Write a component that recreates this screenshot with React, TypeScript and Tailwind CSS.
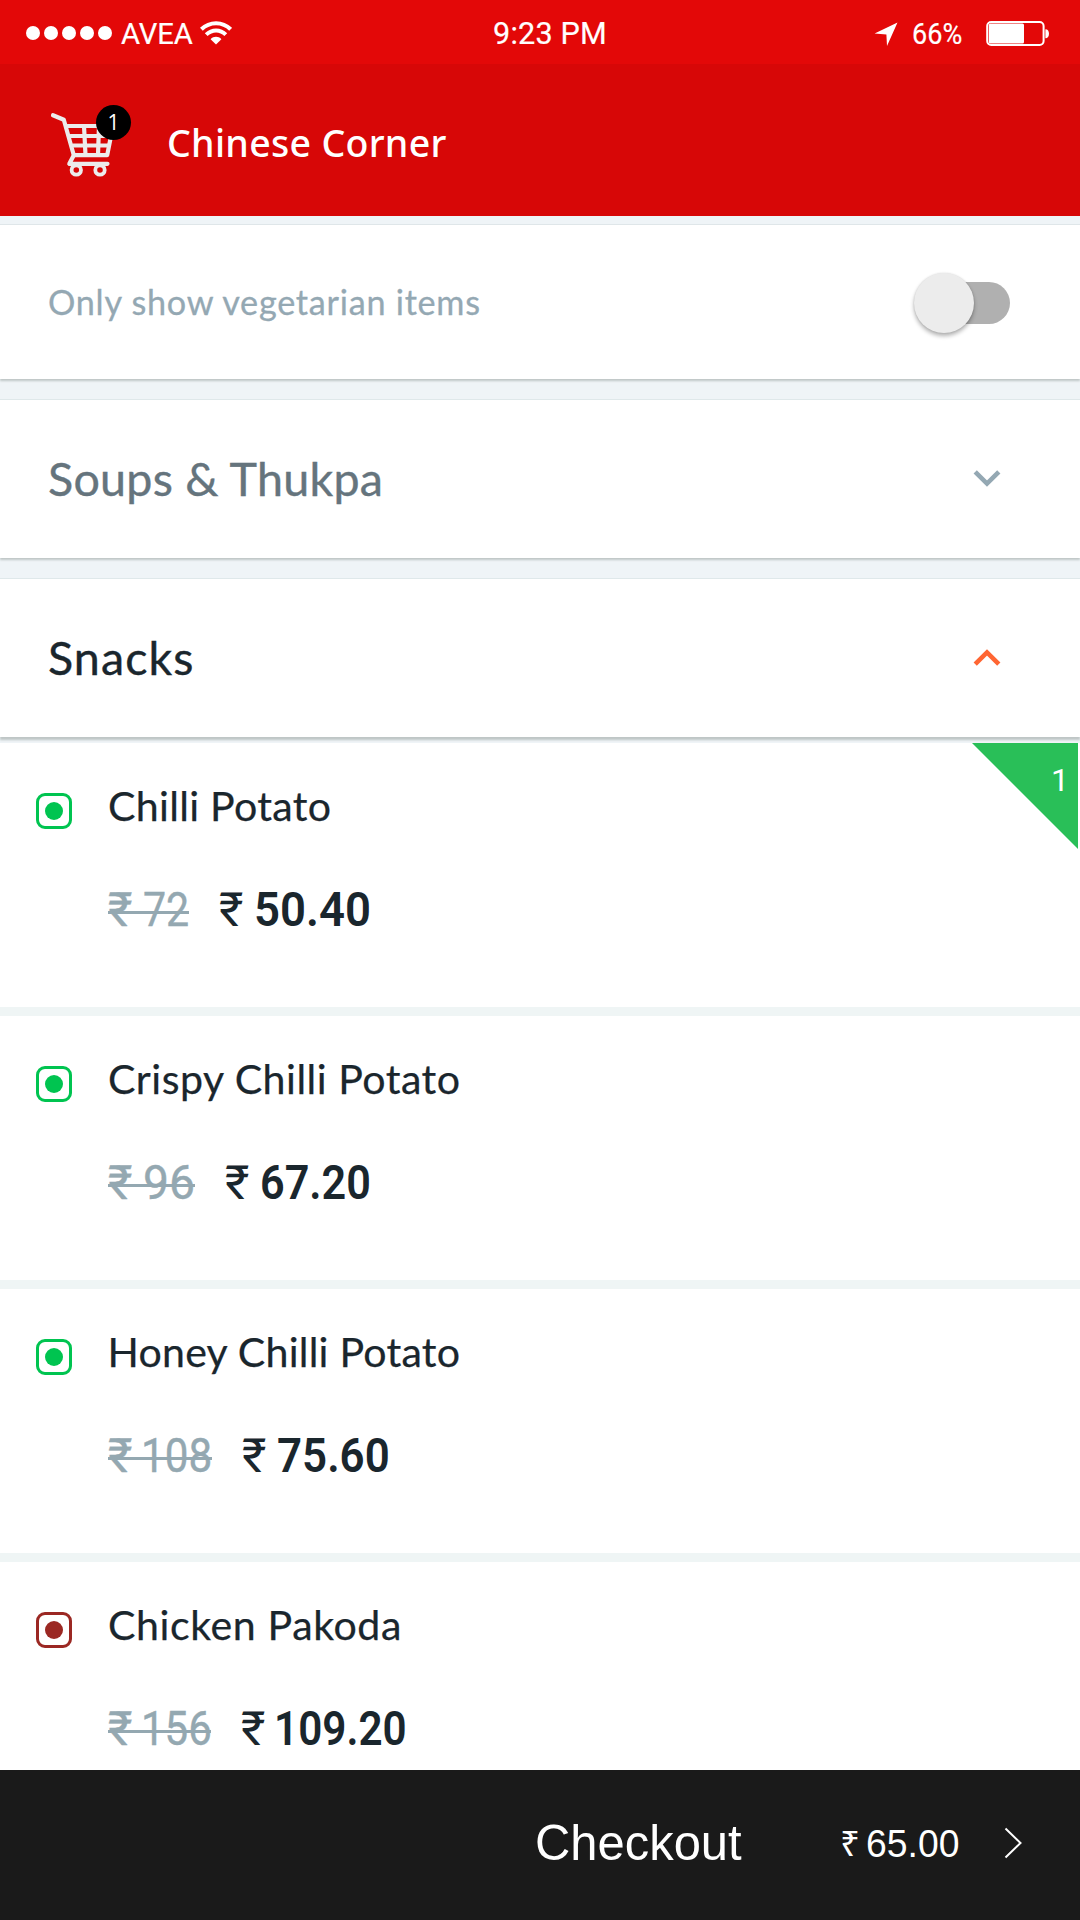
import React from "react";

type Item = {
  name: string;
  nameClass: string;
  veg: boolean;
  oldPrice: string;
  oldClass: string;
  strikeClass: string;
  price: string;
  priceClass: string;
  qty?: number;
};

const items: Item[] = [
  {
    name: "Chilli Potato",
    nameClass: "tracking-[0.3px]",
    veg: true,
    oldPrice: "72",
    oldClass: "scale-x-[0.871]",
    strikeClass: "w-[81px] mr-[30px]",
    price: "50.40",
    priceClass: "ml-[-0.5px] scale-x-[0.965]",
    qty: 1,
  },
  {
    name: "Crispy Chilli Potato",
    nameClass: "tracking-[0.5px]",
    veg: true,
    oldPrice: "96",
    oldClass: "scale-x-[0.98]",
    strikeClass: "w-[87px] mr-[30px]",
    price: "67.20",
    priceClass: "ml-[-0.5px] scale-x-[0.915]",
  },
  {
    name: "Honey Chilli Potato",
    nameClass: "ml-[-0.5px] tracking-[0.24px]",
    veg: true,
    oldPrice: "108",
    oldClass: "ml-[-2px] scale-x-[0.895]",
    strikeClass: "w-[104px] mr-[30px]",
    price: "75.60",
    priceClass: "scale-x-[0.93]",
  },
  {
    name: "Chicken Pakoda",
    nameClass: "tracking-[0.6px]",
    veg: false,
    oldPrice: "156",
    oldClass: "ml-[-2px] scale-x-[0.89]",
    strikeClass: "w-[103px] mr-[30px]",
    price: "109.20",
    priceClass: "ml-[-2px] scale-x-[0.895]",
  },
];

function StatusBar() {
  return (
    <div className="flex h-16 items-center bg-[#e30808] font-['Roboto','Liberation_Sans',sans-serif] text-white [-webkit-text-stroke:0.2px_currentColor]">
      <div className="flex w-[493px] items-center pl-[26px]">
        <div className="mt-[2px] flex gap-1">
          {[0, 1, 2, 3, 4].map((i) => (
            <span key={i} className="size-[14px] rounded-full bg-white" />
          ))}
        </div>
        <span className="ml-[9px] mt-[3px] w-[79px] whitespace-nowrap text-[29.2px] leading-8 tracking-[-0.1px]">
          AVEA
        </span>
        <svg className="mt-[1px] h-[24px] w-[32px]" viewBox="0 0 32 24" fill="none">
          <path d="M1.4 8.3C9.8.2 22.4.2 30.6 8.3" stroke="white" strokeWidth="4" />
          <path d="M6.2 13.6C12 8 20.2 8 25.8 13.6" stroke="white" strokeWidth="4" />
          <path d="M10.6 18.2C13.5 15 18.5 15 21.4 18.2L16 23.6Z" fill="white" />
        </svg>
      </div>
      <span className="mt-[3px] w-[381px] whitespace-nowrap text-[30.6px] leading-8 tracking-[0.2px]">
        9:23 PM
      </span>
      <svg className="mt-[3px] h-6 w-[24px]" viewBox="0 0 24 24">
        <path d="M.6 11.4L23.5 .6L13 24L12.4 12.4Z" fill="white" />
      </svg>
      <span className="ml-[14px] mt-[3px] w-[74px] origin-left scale-x-[0.905] whitespace-nowrap text-[29.9px] leading-8">
        66%
      </span>
      <svg className="mt-[2px] h-[25px] w-[64px]" viewBox="0 0 64 25">
        <rect x="1.2" y="1" width="56.4" height="23" rx="4" fill="none" stroke="white" strokeWidth="2" />
        <rect x="2.8" y="2.6" width="35.2" height="19.8" rx="1.5" fill="white" />
        <path d="M59.4 8.3C61.8 8.3 63 10.2 63 12.7S61.8 17.2 59.4 17.2Z" fill="white" />
      </svg>
    </div>
  );
}

function CartIcon() {
  return (
    <svg
      className="h-[66px] w-[66px]"
      viewBox="50 112 66 66"
      fill="none"
      stroke="#ececec"
      strokeLinecap="round"
      strokeLinejoin="round"
    >
      <path d="M53 115.2L63.8 119.8L73.8 155.2L69.3 163.8H107.5" strokeWidth="4.2" />
      <path d="M67.5 126H113L107.2 155.2H73.8" strokeWidth="4.2" />
      <path d="M70.5 136H111M73 145.5H109" strokeWidth="4.2" />
      <path d="M84 126L85.5 155M99 126L98 155" strokeWidth="4.2" />
      <circle cx="76.3" cy="170" r="4.7" strokeWidth="3.8" />
      <circle cx="100" cy="170" r="4.7" strokeWidth="3.8" />
    </svg>
  );
}

function Header() {
  return (
    <div className="flex h-[152px] items-center bg-[#d70707] pl-[50px]">
      <div className="relative mt-[10px] h-[66px] w-[66px]">
        <CartIcon />
        <span className="absolute left-[46px] top-[-7px] flex size-[35px] items-center justify-center rounded-full bg-black font-['Open_Sans',sans-serif] text-[21px] leading-none text-white">
          1
        </span>
      </div>
      <h1 className="ml-[51px] mt-[6px] whitespace-nowrap font-['Noto_Sans',sans-serif] text-[37.5px] font-medium leading-[48px] tracking-[0.3px] text-white">
        Chinese Corner
      </h1>
    </div>
  );
}

function Chevron({ up }: { up?: boolean }) {
  return (
    <svg className={up ? "h-[18px] w-[28px]" : "-mt-[3px] h-[18px] w-[28px]"} viewBox="0 0 28 18" fill="none">
      <path
        d={up ? "M2.2 15.2L14 3.4L25.8 15.2" : "M2.2 2.8L14 14.6L25.8 2.8"}
        stroke={up ? "#ff6633" : "#94a8b3"}
        strokeWidth="4.6"
      />
    </svg>
  );
}

function VegMark({ veg }: { veg: boolean }) {
  return (
    <span
      className={
        veg
          ? "mt-[50px] flex size-9 shrink-0 items-center justify-center rounded-[9px] border-[3px] border-[#00c450]"
          : "mt-[50px] flex size-9 shrink-0 items-center justify-center rounded-[9px] border-[3px] border-[#9b2823]"
      }
    >
      <span className={veg ? "size-[18px] rounded-full bg-[#00c450]" : "size-[18px] rounded-full bg-[#9b2823]"} />
    </span>
  );
}

function MenuItem({ item }: { item: Item }) {
  return (
    <li className="relative flex h-[273px] border-b-[9px] border-[#eff5f5] bg-white pl-9">
      <VegMark veg={item.veg} />
      <div className="ml-9 pt-[38px]">
        <h3
          className={`whitespace-nowrap text-[41.1px] leading-[48px] text-[#1a262d] [-webkit-text-stroke:0.25px_currentColor] ${item.nameClass}`}
        >
          {item.name}
        </h3>
        <div className="mt-[53px] flex whitespace-nowrap font-['Roboto',sans-serif] text-[47.2px] leading-[56px]">
          <span className={`relative flex text-[#94a8b1] [-webkit-text-stroke:0.4px_currentColor] ${item.strikeClass}`}>
            <span className="w-[35px] shrink-0">₹</span>
            <span className={`origin-left ${item.oldClass}`}>{item.oldPrice}</span>
            <span className="absolute left-0 top-[29px] h-[3px] w-full bg-[#94a8b1]" />
          </span>
          <span className="flex text-[#1a262d]">
            <span className="w-[35px] shrink-0">₹</span>
            <span className={`origin-left font-semibold ${item.priceClass}`}>{item.price}</span>
          </span>
        </div>
      </div>
      {item.qty && (
        <span className="absolute right-[2px] top-0 h-[106px] w-[106px] bg-[#29bf58] text-white [clip-path:polygon(0_0,100%_0,100%_100%)]">
          <span className="absolute right-[9px] top-[19px] font-['Roboto',sans-serif] text-[32px] leading-9">
            {item.qty}
          </span>
        </span>
      )}
    </li>
  );
}

export default function App() {
  return (
    <div className="flex h-[1920px] w-[1080px] flex-col overflow-hidden bg-[#eff4f7] font-['Lato',sans-serif]">
      <StatusBar />
      <Header />
      <div className="mt-2 flex h-[155px] shrink-0 items-center justify-between border-t border-[#dfe6e9] bg-white pl-12 pr-[70px] shadow-[0_2px_2px_#bfc6c6]">
        <span className="whitespace-nowrap text-[34.2px] leading-[48px] tracking-[0.74px] text-[#94a8b3] [-webkit-text-stroke:0.3px_currentColor]">
          Only show vegetarian items
        </span>
        <span className="relative mt-[2px] h-[42px] w-[90px] rounded-full bg-[#b0b0b0]">
          <span className="absolute left-[-6px] top-[-9px] size-[60px] rounded-full bg-[#ececec] shadow-[0_3px_4px_rgba(0,0,0,0.3),0_0_2px_rgba(0,0,0,0.12)]" />
        </span>
      </div>
      <div className="mt-5 flex h-[159px] shrink-0 items-center justify-between border-t border-[#dfe8ea] bg-white pl-12 pr-[79px] shadow-[0_2px_2px_#bfc6c6]">
        <span className="mt-[-2px] whitespace-nowrap text-[46.6px] leading-[56px] tracking-[0.27px] text-[#65747d] [-webkit-text-stroke:0.4px_currentColor]">
          Soups &amp; Thukpa
        </span>
        <Chevron />
      </div>
      <div className="relative z-10 mt-5 flex h-[159px] shrink-0 items-center justify-between border-t border-[#dfe8ea] bg-white pl-12 pr-[79px] shadow-[0_3px_2px_#bfc6c6]">
        <span className="mt-[-2px] whitespace-nowrap text-[46.6px] leading-[56px] tracking-[1.1px] text-[#1a262d] [-webkit-text-stroke:0.4px_currentColor]">
          Snacks
        </span>
        <Chevron up />
      </div>
      <ul className="mt-[6px] h-[1027px] shrink-0 overflow-hidden bg-white">
        {items.map((item) => (
          <MenuItem key={item.name} item={item} />
        ))}
      </ul>
      <div className="flex h-[150px] shrink-0 items-center bg-[#1a1a1a] pb-1 pl-[535px] font-['Liberation_Sans',sans-serif] text-white">
        <span className="w-[305px] origin-left scale-x-[0.965] whitespace-nowrap text-[50.7px] leading-[60px]">
          Checkout
        </span>
        <span className="mt-[1px] w-[26px] text-[35px] leading-[44px]">₹</span>
        <span className="mt-[1px] w-[138px] origin-left scale-x-[0.955] whitespace-nowrap text-[39.1px] leading-[44px]">
          65.00
        </span>
        <svg className="h-[32px] w-[19px]" viewBox="0 0 19 32" fill="none">
          <path d="M1.5 1.5L16.5 16L1.5 30.5" stroke="white" strokeWidth="2" />
        </svg>
      </div>
    </div>
  );
}
